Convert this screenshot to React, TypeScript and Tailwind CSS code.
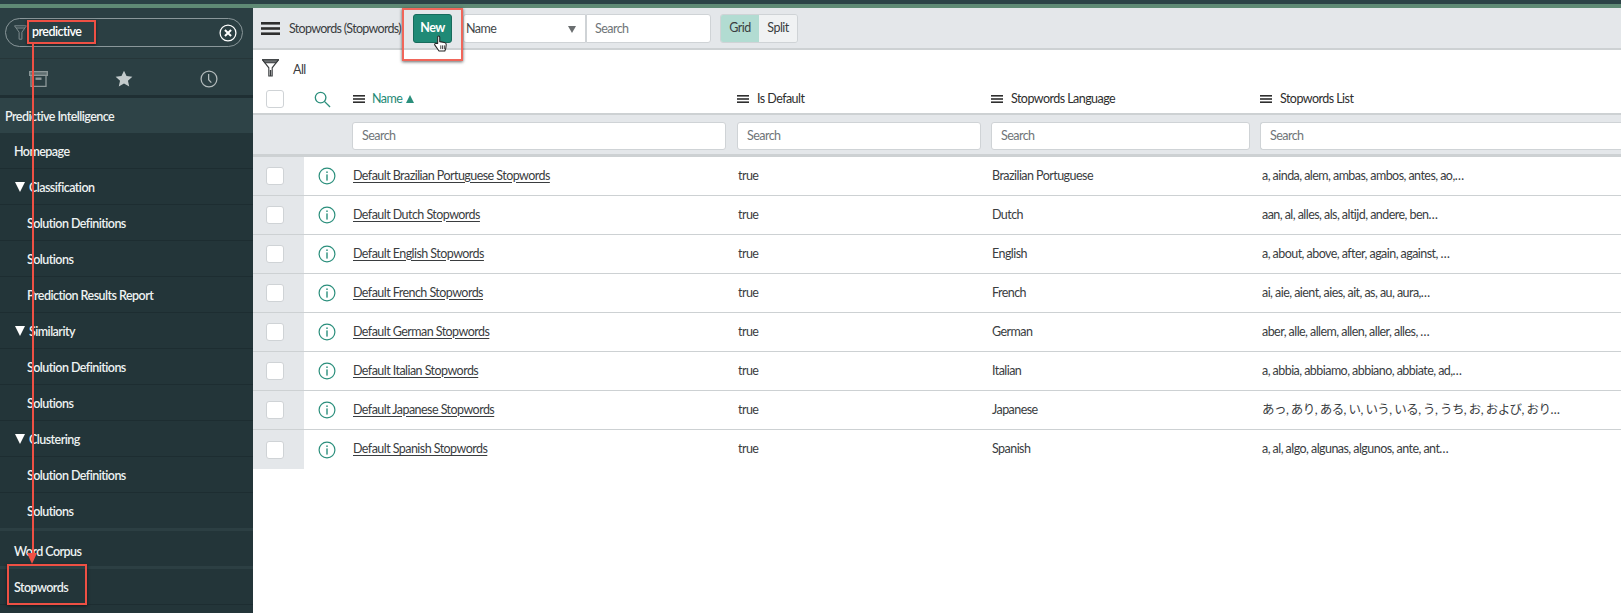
import React from "react";

function Menu({ className = "" }: { className?: string }) {
  return (
    <svg viewBox="0 0 12 10" className={className} fill="currentColor" preserveAspectRatio="none">
      <rect x="0" y="0" width="12" height="2" />
      <rect x="0" y="4" width="12" height="2" />
      <rect x="0" y="8" width="12" height="2" />
    </svg>
  );
}

function Info() {
  return (
    <svg viewBox="0 0 18 18" className="w-[18px] h-[18px] text-[#2b8f7c]" fill="none" stroke="currentColor">
      <circle cx="9" cy="9" r="7.9" strokeWidth="1.2" />
      <rect x="8.3" y="4.4" width="1.4" height="1.6" fill="currentColor" stroke="none" />
      <rect x="8.3" y="7.4" width="1.4" height="6.2" fill="currentColor" stroke="none" />
    </svg>
  );
}

const rows = [
  ["Default Brazilian Portuguese Stopwords", "Brazilian Portuguese", "a, ainda, alem, ambas, ambos, antes, ao,…"],
  ["Default Dutch Stopwords", "Dutch", "aan, al, alles, als, altijd, andere, ben…"],
  ["Default English Stopwords", "English", "a, about, above, after, again, against, …"],
  ["Default French Stopwords", "French", "ai, aie, aient, aies, ait, as, au, aura,…"],
  ["Default German Stopwords", "German", "aber, alle, allem, allen, aller, alles, …"],
  ["Default Italian Stopwords", "Italian", "a, abbia, abbiamo, abbiano, abbiate, ad,…"],
  ["Default Japanese Stopwords", "Japanese", "あっ, あり, ある, い, いう, いる, う, うち, お, および, おり…"],
  ["Default Spanish Stopwords", "Spanish", "a, al, algo, algunas, algunos, ante, ant…"],
];

function NavRow({ label, level, arrow, last, extra }: { label: string; level: number; arrow?: boolean; last?: boolean; extra?: boolean }) {
  return (
    <div className={`flex items-center font-semibold text-[#eef2f2] ${extra ? "pt-[7px]" : "pt-[4px]"} ${last ? "h-[38px] border-b-[3px] border-[#2c3f43]" : "h-9 border-b border-[#1d2d31]"} ${level === 0 ? "pl-[14px]" : level === 2 ? "pl-[27px]" : "pl-[15px]"}`}>
      {arrow && <span className="w-0 h-0 mr-[4px] -mt-[3px] border-l-[5.5px] border-r-[5.5px] border-t-[10px] border-l-transparent border-r-transparent border-t-white" />}
      <span>{label}</span>
    </div>
  );
}

function SearchBox({ className = "" }: { className?: string }) {
  return (
    <div className={`h-7 bg-white border border-[#cfd3d6] rounded-[3px] flex items-center pl-[9px] text-[#6f7578] ${className}`}>Search</div>
  );
}

export default function App() {
  return (
    <div className="relative w-[1621px] h-[613px] overflow-hidden bg-white text-[#2e2e2e] text-[12.5px] tracking-[-0.55px]" style={{ fontFamily: 'Lato, "Noto Sans CJK JP", sans-serif' }}>
      <div className="h-1 bg-[#2b4246]" />
      <div className="h-1 bg-[#5f8a75]" />
      <div className="flex h-[605px]">
        <aside className="w-[253px] shrink-0 bg-[#233539] flex flex-col">
          <div className="h-[50px] bg-[#2b3f43] px-[5px] pt-[10px] shrink-0">
            <div className="h-[29px] w-[238px] border border-[#8a979a] rounded-full flex items-center pl-[8px] pr-[5px]">
              <svg viewBox="0 0 13 15" className="w-[13px] h-[15px]" fill="none" stroke="#7d8b8d" strokeWidth="1">
                <path d="M.5.8h12l-4.600 6.400v7h-2.800v-7z" />
                <path d="M2 3h9" />
              </svg>
              <span className="ml-[5px] text-white font-semibold">predictive</span>
              <svg viewBox="0 0 20 20" className="ml-auto w-[18px] h-[18px]" fill="none" stroke="white">
                <circle cx="10" cy="10" r="8.8" strokeWidth="1.4" />
                <path d="M6.600 6.600l6.800 6.800M13.400 6.600l-6.800 6.800" strokeWidth="2.2" />
              </svg>
            </div>
          </div>
          <div className="h-[40px] bg-[#2b3f43] border-t border-[#263639] border-b-[3px] border-b-[#1f2f33] flex items-center gap-[67px] pl-[29px] pt-[4px] shrink-0">
            <svg viewBox="0 0 19 16" className="w-[19px] h-[16px]" fill="none" stroke="#8d9899" strokeWidth="1.3">
              <path d="M.7.7h17.600v3.600H.7z" fill="#5f6e70" />
              <path d="M2 4.300v11h15v-11" />
              <rect x="6.500" y="6.500" width="6" height="2.400" fill="#8d9899" stroke="none" />
            </svg>
            <svg viewBox="0 0 20 20" className="w-[18px] h-[18px]" fill="#c3cbcc">
              <path d="M10 .8l2.800 6 6.500.7-4.900 4.400 1.400 6.400L10 15l-5.800 3.300 1.400-6.400L.7 7.500l6.500-.7z" />
            </svg>
            <svg viewBox="0 0 20 20" className="w-[18px] h-[18px]" fill="none" stroke="#b3bbbc" strokeWidth="1.4">
              <circle cx="10" cy="10" r="8.800" />
              <path d="M9.600 4.500v6.300l3 3.200" />
            </svg>
          </div>
          <div className="h-[35px] bg-[#2e4347] flex items-center pl-[5px] pt-[3px] font-semibold text-[#eef2f2] shrink-0">Predictive Intelligence</div>
          <NavRow label="Homepage" level={0} />
          <NavRow label="Classification" level={1} arrow />
          <NavRow label="Solution Definitions" level={2} />
          <NavRow label="Solutions" level={2} />
          <NavRow label="Prediction Results Report" level={2} />
          <NavRow label="Similarity" level={1} arrow />
          <NavRow label="Solution Definitions" level={2} />
          <NavRow label="Solutions" level={2} />
          <NavRow label="Clustering" level={1} arrow />
          <NavRow label="Solution Definitions" level={2} />
          <NavRow label="Solutions" level={2} last />
          <NavRow label="Word Corpus" level={0} last extra />
          <NavRow label="Stopwords" level={0} />
        </aside>
        <main className="flex-1 min-w-0 flex flex-col">
          <div className="h-[42px] shrink-0 bg-[#e4e7ea] border-b-2 border-[#cdd1d3] flex items-start pt-[6px] pl-[8px]">
            <div className="h-[29px] flex items-center">
              <Menu className="w-[19px] h-[13px] text-[#2e2e2e]" />
              <span className="ml-[9px] pt-[1px] w-[124px] text-[#3a3d3f] whitespace-nowrap tracking-[-0.7px]">Stopwords (Stopwords)</span>
            </div>
            <button className="w-[39px] h-[29px] rounded-[3px] bg-[#1f8a76] border border-[#176b5c] text-white font-bold">New</button>
            <div className="ml-[11px] w-[123px] h-[29px] bg-white border border-[#cfd3d6] rounded-l-[3px] flex items-center justify-between pl-[2px] pr-[9px] pt-[1px] text-[#44484a]">
              <span>Name</span>
              <span className="w-0 h-0 border-l-[4px] border-r-[4px] border-t-[7px] border-l-transparent border-r-transparent border-t-[#6a6e70]" />
            </div>
            <div className="w-[125px] h-[29px] bg-white border border-[#cfd3d6] rounded-r-[3px] flex items-center pl-[8px] pt-[1px] text-[#6f7578]">Search</div>
            <div className="ml-[9px] flex h-[29px] rounded-[3px] border border-[#cfd3d6] text-[#3a3d3f] overflow-hidden">
              <div className="w-[38px] bg-[#b2dcd2] flex items-center justify-center">Grid</div>
              <div className="w-[38px] bg-[#f0f2f3] flex items-center justify-center">Split</div>
            </div>
          </div>
          <div className="h-[35px] shrink-0 flex items-center pl-[9px]">
            <svg viewBox="0 0 17 18" className="w-[17px] h-[18px]" fill="none" stroke="#3a3d3f" strokeWidth="1.1">
              <path d="M.6.8h15.800l-6.200 8v8.200H6.800v-8.200z" />
              <path d="M.6.8h15.800l-2.300 3H2.900z" fill="#6b6f71" />
              <rect x="7.800" y="11" width="1.500" height="6" fill="#3a3d3f" stroke="none" />
            </svg>
            <span className="ml-[14px] mt-[5px] text-[#3a3d3f]">All</span>
          </div>
          <div className="h-[30px] shrink-0 flex items-center border-b-2 border-[#cdd1d3]">
            <div className="w-[51px] pl-[13px]">
              <div className="w-[18px] h-[18px] bg-white border border-[#cfd3d6] rounded-[3px]" />
            </div>
            <div className="w-[48px] pl-[10px]">
              <svg viewBox="0 0 18 18" className="w-[17px] h-[17px]" fill="none" stroke="#2b8f7c" strokeWidth="1.4">
                <circle cx="7" cy="7" r="5.600" />
                <path d="M11 11l6 6" />
              </svg>
            </div>
            <div className="w-[385px] flex items-center gap-[7px] pl-[1px] text-[#1f8a76]">
              <Menu className="w-3 h-2 text-[#2e2e2e]" />
              <span>Name</span>
              <span className="-ml-[3px] w-0 h-0 border-l-[4.5px] border-r-[4.5px] border-b-[8px] border-l-transparent border-r-transparent border-b-[#2b8f7c]" />
            </div>
            <div className="w-[254px] flex items-center gap-[8px]">
              <Menu className="w-3 h-2 text-[#2e2e2e]" />
              <span>Is Default</span>
            </div>
            <div className="w-[269px] flex items-center gap-[8px]">
              <Menu className="w-3 h-2 text-[#2e2e2e]" />
              <span>Stopwords Language</span>
            </div>
            <div className="flex items-center gap-[8px]">
              <Menu className="w-3 h-2 text-[#2e2e2e]" />
              <span>Stopwords List</span>
            </div>
          </div>
          <div className="h-[42px] shrink-0 bg-[#e4e7ea] border-b-[3px] border-[#cdd1d3] flex items-start pt-[7px]">
            <div className="w-[99px]" />
            <SearchBox className="w-[374px]" />
            <SearchBox className="w-[244px] ml-[11px]" />
            <SearchBox className="w-[259px] ml-[10px]" />
            <SearchBox className="flex-1 ml-[10px] rounded-r-none border-r-0" />
          </div>
          {rows.map((r) => (
            <div key={r[0]} className="h-[39px] shrink-0 flex items-center border-b border-[#cdd1d3] last:border-b-0 text-[#3a3d3f]">
              <div className="w-[51px] h-full bg-[#e4e7ea] flex items-center pl-[13px]">
                <div className="w-[18px] h-[18px] bg-white border border-[#cfd3d6] rounded-[3px]" />
              </div>
              <div className="w-[48px] pl-[14px]"><Info /></div>
              <div className="w-[385px] underline pl-[1px] underline-offset-2 whitespace-nowrap">{r[0]}</div>
              <div className="w-[254px] pl-[1px]">true</div>
              <div className="w-[269px] pl-[1px]">{r[1]}</div>
              <div className="whitespace-nowrap pl-[2px]">{r[2]}</div>
            </div>
          ))}
        </main>
      </div>

      {/* red annotation overlays */}
      <div className="absolute left-[27px] top-[20px] w-[69px] h-[24px] border-2 border-[#ef5044] shadow-[0_1px_3px_rgba(0,0,0,0.5)]" />
      <div className="absolute left-[32px] top-[44px] w-[2px] h-[512px] bg-[#ef5044]" />
      <div className="absolute left-[27px] top-[553px] w-0 h-0 border-l-[5.5px] border-r-[5.5px] border-t-[11px] border-l-transparent border-r-transparent border-t-[#ef5044]" />
      <div className="absolute left-[7px] top-[564px] w-[80px] h-[41px] border-2 border-[#ef5044] shadow-[0_1px_3px_rgba(0,0,0,0.5)]" />
      <div className="absolute left-[402px] top-[8px] w-[61px] h-[53px] border-2 border-[#f0665a] shadow-[0_1px_3px_rgba(0,0,0,0.6)]" />
      <svg viewBox="0 0 16 18" className="absolute left-[433px] top-[35px] w-[15px] h-[17px]" fill="white" stroke="#222" strokeWidth="1.1" strokeLinejoin="round">
        <path d="M5 9V2.200c0-1.500 2.200-1.500 2.200 0V7l5 .9c1.400.3 2 1 1.900 2.200l-.5 4.200-1 2.700H6.400L2 10.700c-.9-1.200.7-2.600 1.700-1.600z" />
        <path d="M8.300 11v4M10.200 11v4M12.100 11v4" strokeWidth="0.9" fill="none" />
      </svg>
    </div>
  );
}
